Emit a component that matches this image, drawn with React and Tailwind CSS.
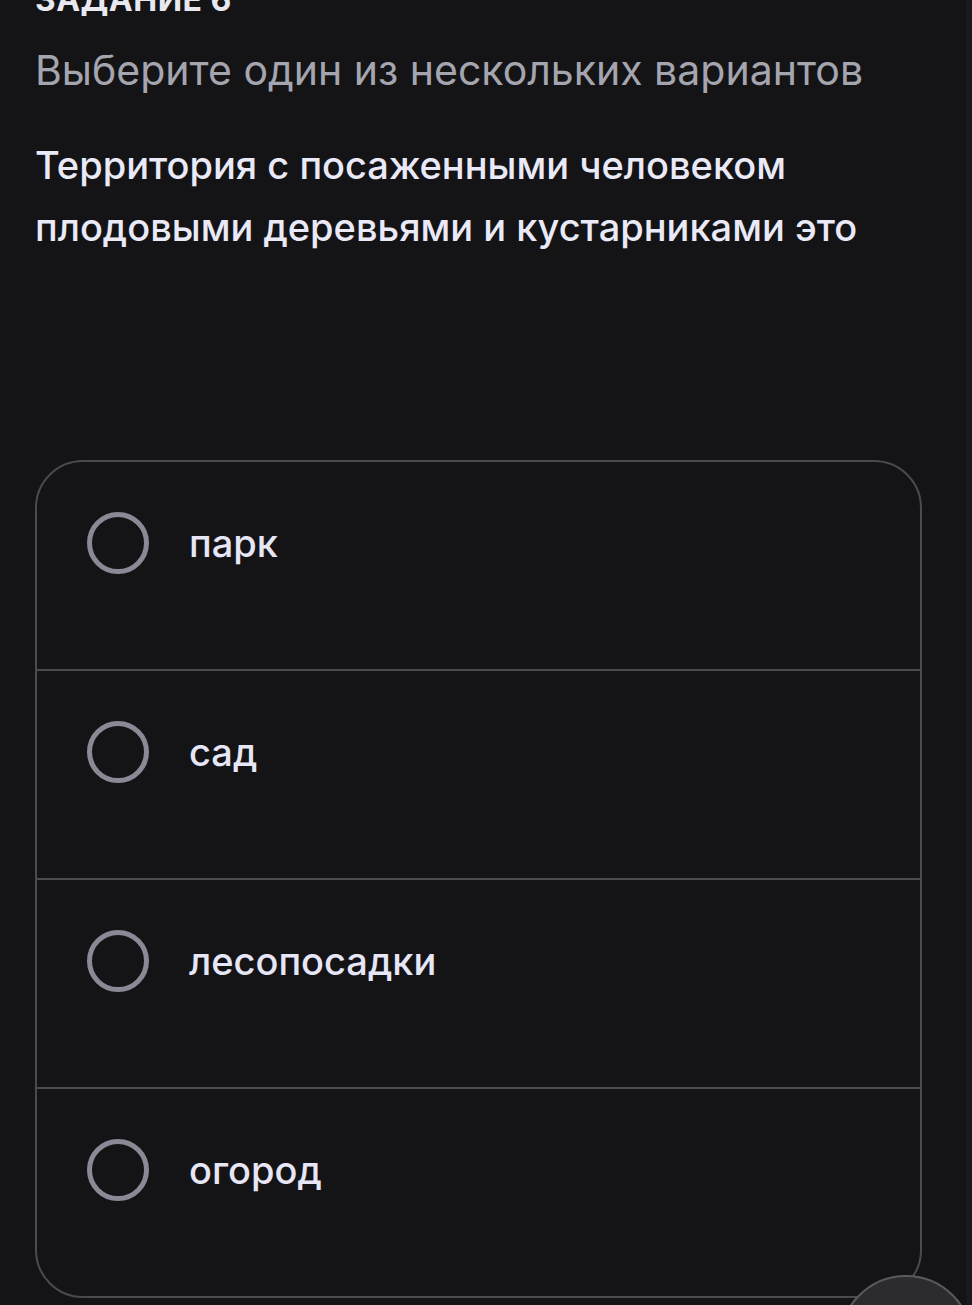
import React from "react";

const options = ["парк", "сад", "лесопосадки", "огород"];

const Radio = () => (
  <span className="block w-[62px] h-[62px] rounded-full border-[5px] border-[#8a8a96] shrink-0" />
);

export default function App() {
  return (
    <div
      className="relative min-h-[1305px] h-[1305px] overflow-hidden bg-[#141416] px-[35px]"
      style={{ fontFamily: "Inter, 'Noto Sans', sans-serif" }}
    >
      {/* Task header, scrolled partly out of view */}
      <div className="mt-[-19px] text-[32px] leading-[38px] font-bold uppercase text-[#e8e8f0] tracking-[0.5px]">
        Задание 6
      </div>

      <p className="mt-[27px] text-[41px] leading-[48px] text-[#a5a5b0]">
        Выберите один из нескольких вариантов
      </p>

      <p className="mt-[40px] text-[38px] leading-[62px] font-medium text-[#e9e9f7]">
        Территория с посаженными человеком плодовыми деревьями и кустарниками это
      </p>

      {/* Answers */}
      <div className="mt-[202px] w-[887px] rounded-[48px] border-2 border-[#4a4a4f] overflow-hidden">
        {options.map((o, i) => (
          <div
            key={o}
            className={`flex items-start gap-[40px] pl-[50px] ${
              i > 0
                ? "h-[209px] pt-[50px] border-t-2 border-[#4a4a4f]"
                : "h-[207px] pt-[50px]"
            }`}
          >
            <Radio />
            <span className="text-[38px] leading-[62px] font-medium text-[#e6e6f6]">
              {o}
            </span>
          </div>
        ))}
      </div>

      {/* floating button */}
      <div className="absolute left-[839px] top-[1275px] w-[134px] h-[134px] rounded-full bg-[#2c2c2e] border-2 border-[#5a5a5c]" />
      <div className="absolute right-0 top-0 w-[6px] h-full bg-[#1a1a1c]" />
    </div>
  );
}
